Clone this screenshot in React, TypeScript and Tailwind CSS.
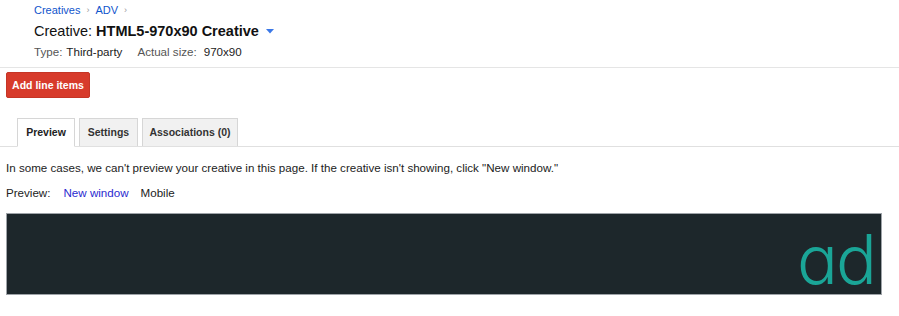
import React from "react";

export default function App() {
  return (
    <div className="w-[899px] h-[316px] bg-white text-[#222] overflow-hidden" style={{ fontFamily: '"Liberation Sans", Arial, sans-serif' }}>
      <div className="pl-[34px] pt-[3px]">
        <div className="flex items-center text-[11px] leading-[14px] text-[#15c]">
          <span>Creatives</span>
          <span className="mx-[6px] text-[#999] text-[9px]">›</span>
          <span>ADV</span>
          <span className="mx-[6px] text-[#999] text-[9px]">›</span>
        </div>
        <div className="mt-[4px] flex items-center text-[14.5px] leading-[20px] text-[#111]">
          <span>Creative:&nbsp;</span>
          <span className="font-bold">HTML5-970x90 Creative</span>
          <svg width="8" height="5" viewBox="0 0 8 5" className="ml-[7px] mt-[1px]">
            <polygon points="0,0 8,0 4,4.5" fill="#3b78e7" />
          </svg>
        </div>
        <div className="mt-[3px] flex items-center text-[11.6px] leading-[16px]">
          <span className="text-[#555]">Type:</span>
          <span className="ml-[4px] text-[#222]">Third-party</span>
          <span className="ml-[15px] text-[#555]">Actual size:</span>
          <span className="ml-[7px] text-[#222]">970x90</span>
        </div>
      </div>
      <div className="mt-[7px] border-t border-[#e5e5e5]" />
      <div className="pl-[6px] mt-[4px]">
        <button className="h-[26px] w-[84px] rounded-[2px] bg-[#d73b2b] border border-[#c53526] text-white text-[10.5px] font-bold leading-none">
          Add line items
        </button>
      </div>
      <div className="mt-[20px] flex items-end pl-[17px] border-b border-[#e0e0e0] h-[29px]">
        <div className="h-[29px] w-[58px] -mb-px bg-white border border-[#d6d6d6] border-b-white flex items-center justify-center text-[10.5px] font-bold text-[#222]">
          Preview
        </div>
        <div className="ml-[4px] h-[28px] w-[59px] bg-[#f1f1f1] border border-[#d6d6d6] border-b-0 flex items-center justify-center text-[10.5px] font-bold text-[#333]">
          Settings
        </div>
        <div className="ml-[4px] h-[28px] w-[96px] bg-[#f1f1f1] border border-[#d6d6d6] border-b-0 flex items-center justify-center text-[10.5px] font-bold text-[#333]">
          Associations (0)
        </div>
      </div>
      <div className="pl-[6px] mt-[13px] text-[11.6px] leading-[16px] text-[#222]">
        In some cases, we can't preview your creative in this page. If the creative isn't showing, click "New window."
      </div>
      <div className="pl-[6px] mt-[9px] flex items-center text-[11.6px] leading-[16px]">
        <span className="text-[#222]">Preview:</span>
        <span className="ml-[13px] text-[#2a2ad0]">New window</span>
        <span className="ml-[12px] text-[#222]">Mobile</span>
      </div>
      <div className="ml-[6px] mt-[12px] w-[876px] h-[82px] bg-[#1d272b] border border-[#9ea3a8] flex items-end justify-end pr-[6px] pb-[1px]">
        <span className="text-[68px] leading-[68px] font-light text-[#1aa597] tracking-[-2px]" style={{ fontFamily: 'Inter, "DejaVu Sans", sans-serif', fontFeatureSettings: '"cv11"' }}>
          ad
        </span>
      </div>
    </div>
  );
}
